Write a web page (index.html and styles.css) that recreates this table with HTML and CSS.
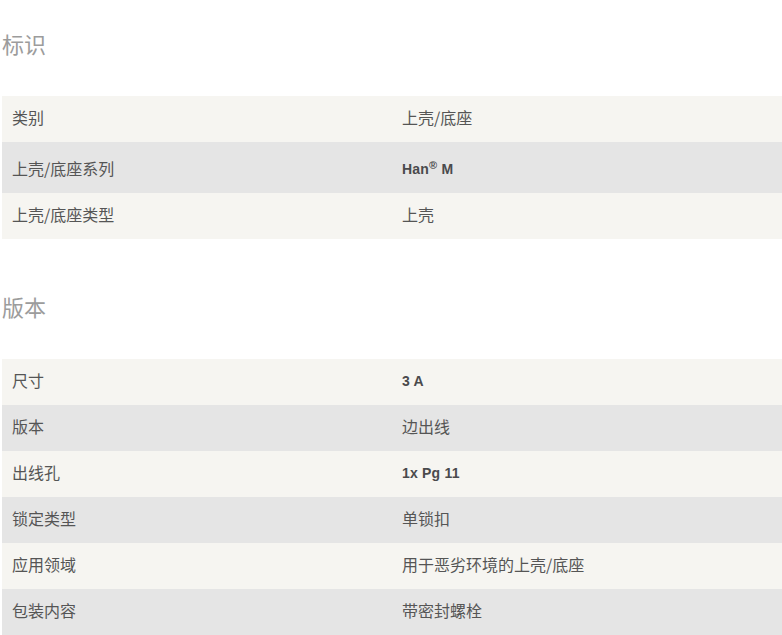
FILE: index.html
```html
<!DOCTYPE html>
<html lang="zh-CN">
<head>
<meta charset="utf-8">
<title>标识 / 版本</title>
<link rel="stylesheet" href="styles.css">
</head>
<body>
<div class="page">
  <section class="block block-first">
    <h2 class="block-title">标识</h2>
    <table class="spec">
      <tr class="row-light"><td class="key">类别</td><td class="val">上壳/底座</td></tr>
      <tr class="row-dark row-tall"><td class="key">上壳/底座系列</td><td class="val"><span class="latin">Han<sup class="reg">®</sup> M</span></td></tr>
      <tr class="row-light"><td class="key">上壳/底座类型</td><td class="val">上壳</td></tr>
    </table>
  </section>
  <section class="block block-second">
    <h2 class="block-title">版本</h2>
    <table class="spec">
      <tr class="row-light"><td class="key">尺寸</td><td class="val"><span class="latin">3 A</span></td></tr>
      <tr class="row-dark"><td class="key">版本</td><td class="val">边出线</td></tr>
      <tr class="row-light"><td class="key">出线孔</td><td class="val"><span class="latin">1x Pg 11</span></td></tr>
      <tr class="row-dark"><td class="key">锁定类型</td><td class="val">单锁扣</td></tr>
      <tr class="row-light"><td class="key">应用领域</td><td class="val">用于恶劣环境的上壳/底座</td></tr>
      <tr class="row-dark"><td class="key">包装内容</td><td class="val">带密封螺栓</td></tr>
    </table>
  </section>
</div>
</body>
</html>
```

FILE: styles.css
```css
html, body {
  margin: 0;
  padding: 0;
  background: #ffffff;
}
body {
  font-family: "Noto Sans CJK SC", "Noto Sans", sans-serif;
  color: #555555;
  overflow: hidden;
}
.page {
  padding: 0 0 0 2px;
}
.block-first {
  padding-top: 27px;
}
.block-second {
  margin-top: 51px;
}
.block-title {
  margin: 0;
  font-size: 22px;
  line-height: 32px;
  font-weight: 400;
  color: #9c9c9c;
}
.spec {
  margin-top: 37px;
  width: 780px;
  border-collapse: collapse;
  table-layout: fixed;
}
.spec td {
  width: 50%;
  height: 46px;
  padding: 0 10px 4px 10px;
  box-sizing: border-box;
  font-size: 16px;
  line-height: 22px;
  vertical-align: middle;
  color: #555555;
}
.row-light {
  background: #f6f5f1;
}
.row-dark {
  background: #e5e5e5;
}
.row-tall td {
  height: 51px;
  padding-top: 5px;
}
.latin {
  font-family: "Liberation Sans", Arial, sans-serif;
  font-weight: 700;
  font-size: 14px;
  letter-spacing: 0.2px;
  color: #4a4a4c;
}
.reg {
  font-size: 11px;
  line-height: 0;
  vertical-align: 5px;
}
```
